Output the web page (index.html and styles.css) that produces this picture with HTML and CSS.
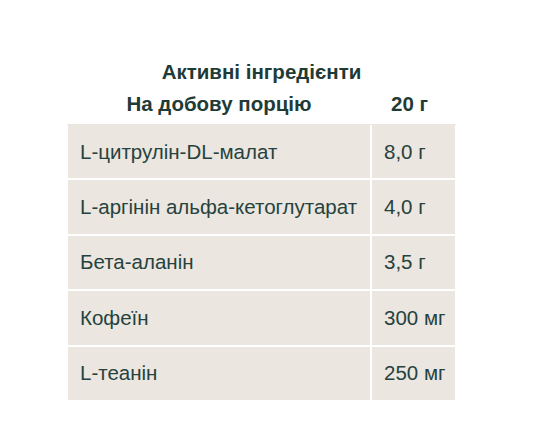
FILE: index.html
```html
<!DOCTYPE html>
<html lang="uk">
<head>
    <meta charset="UTF-8">
    <meta name="viewport" content="width=device-width, initial-scale=1.0">
    <title>Активні інгредієнти</title>
    <link rel="stylesheet" href="styles.css">
</head>
<body>
    <table class="ingredients">
        <caption>Активні інгредієнти</caption>
        <thead>
            <tr>
                <th class="name-head">На добову порцію</th>
                <th class="dose-head">20 г</th>
            </tr>
        </thead>
        <tbody>
            <tr><td>L-цитрулін-DL-малат</td><td>8,0 г</td></tr>
            <tr><td>L-аргінін альфа-кетоглутарат</td><td>4,0 г</td></tr>
            <tr><td>Бета-аланін</td><td>3,5 г</td></tr>
            <tr><td>Кофеїн</td><td>300 мг</td></tr>
            <tr><td>L-теанін</td><td>250 мг</td></tr>
        </tbody>
    </table>
</body>
</html>
```
FILE: styles.css
```css
body {
    margin: 0;
    padding: 60px 0 0 66px;
    background: #fff;
    font-family: "Liberation Sans", Arial, sans-serif;
    color: #26423e;
}
.ingredients {
    border-collapse: collapse;
    table-layout: fixed;
    width: 391px;
}
caption {
    font-size: 20.5px;
    font-weight: bold;
    color: #1f3b36;
    line-height: 24px;
    padding-bottom: 8px;
}
th {
    font-size: 20.5px;
    font-weight: bold;
    color: #1f3b36;
    line-height: 24px;
    padding: 0 0 7px;
    border: 2px solid transparent;
    border-top: 0;
    white-space: nowrap;
}
.name-head {
    width: 302px;
}
.dose-head {
    text-align: left;
    padding-left: 19px;
}
td {
    background: #ebe6df;
    border: 2px solid #fff;
    height: 55.4px;
    padding: 0 4px 0 12px;
    font-size: 20.5px;
    line-height: 24px;
    white-space: nowrap;
    box-sizing: border-box;
}
```
